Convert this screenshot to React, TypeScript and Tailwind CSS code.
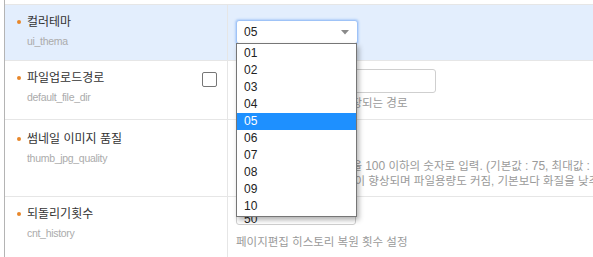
import type { ReactNode } from "react";

const FONT = "font-['Liberation_Sans','Noto_Sans_CJK_KR',sans-serif]";

const options = ["01", "02", "03", "04", "05", "06", "07", "08", "09", "10"];

type RowProps = {
  label: string;
  name: string;
  active?: boolean;
  check?: boolean;
  labelPad?: string;
  className: string;
  children: ReactNode;
};

const Row = ({ label, name, active, check, labelPad = "pt-[8px]", className, children }: RowProps) => (
  <div className={`flex border-t border-[#e6e6e6] ${active ? "bg-[#e3eefd]" : "bg-white"}`}>
    <div className={`w-[222px] shrink-0 pl-[12px] ${labelPad}`}>
      <div className="flex h-[18px] items-center">
        <span className="h-[4px] w-[4px] shrink-0 rounded-full bg-[#e8872a]" />
        <span className="ml-[6px] text-[12px] leading-[18px] text-[#333]">{label}</span>
        {check && (
          <span className="ml-auto mr-[10px] mt-[2px] h-[15px] w-[15px] rounded-[2px] border border-[#767676] bg-white" />
        )}
      </div>
      <div className="mt-[1px] pl-[10px] text-[10.5px] leading-[18px] tracking-[-0.3px] text-[#ababab]">{name}</div>
    </div>
    <div className={`flex-1 border-l border-[#e6e6e6] pl-[8px] ${className}`}>{children}</div>
  </div>
);

const Help = ({ children }: { children: ReactNode }) => (
  <p className="whitespace-nowrap text-[11.5px] leading-[15px] text-[#9a9a9a]">{children}</p>
);

const Num = ({ children }: { children: ReactNode }) => <span className="text-[12px]">{children}</span>;

export default function App() {
  return (
    <div className={`h-[257px] overflow-hidden bg-white ${FONT}`}>
      <div className="ml-[4px] border-l border-[#b4b4b4] pt-[4px]">
        <Row label="컬러테마" name="ui_thema" active className="pt-[15px] pb-[16px]">
          <div className="relative w-[122px]">
            <div className="flex h-[24px] items-center justify-between rounded-[3px] border border-[#9fc3f7] bg-white pl-[7px] pr-[7px] text-[12px] text-[#222] shadow-[0_0_2px_1px_rgba(120,170,245,0.45)]">
              <span>05</span>
              <svg width="8" height="5" viewBox="0 0 8 5" className="mr-[1px]">
                <path d="M0 0h8L4 4.5z" fill="#8a8a8a" />
              </svg>
            </div>
            <ul className="absolute left-0 top-[23px] z-10 w-[121px] border border-[#767676] bg-white py-[1px] text-[12px] text-[#222] shadow-[2px_3px_5px_rgba(0,0,0,0.3)]">
              {options.map((o) => (
                <li
                  key={o}
                  className={`h-[17px] pl-[7px] leading-[17px] ${o === "05" ? "bg-[#1e90ff] text-white" : ""}`}
                >
                  {o}
                </li>
              ))}
            </ul>
          </div>
        </Row>

        <Row label="파일업로드경로" name="default_file_dir" check className="pt-[8px] pb-[8px]">
          <div className="h-[24px] w-[200px] rounded-[3px] border border-[#cfcfcf] bg-white" />
          <div className="mt-[3px]">
            <Help>업로드 파일이 서버에 저장되는 경로</Help>
          </div>
        </Row>

        <Row
          label="썸네일 이미지 품질"
          name="thumb_jpg_quality"
          labelPad="pt-[10px]"
          className="pt-[8px] pb-[7px]"
        >
          <div className="h-[24px] w-[120px] rounded-[3px] border border-[#cfcfcf] bg-white" />
          <div className="mt-[7px]">
            <Help>
              썸네일 이미지 저장 품질을 <Num>100</Num> 이하의 숫자로 입력<Num>. (</Num>기본값 <Num>: 75,</Num> 최대값{" "}
              <Num>: 100)</Num>
            </Help>
            <Help>값이 클수록, 썸네일 화질이 향상되며 파일용량도 커짐, 기본보다 화질을 낮추면 용량이 줄어듬</Help>
          </div>
        </Row>

        <Row label="되돌리기횟수" name="cnt_history" className="pt-[4px] pb-[8px]">
          <div className="h-[24px] w-[120px] rounded-[3px] border border-[#cfcfcf] bg-white pl-[7px] pt-[11px] text-[12px] leading-[12px] text-[#222]">
            50
          </div>
          <div className="mt-[10px]">
            <Help>페이지편집 히스토리 복원 횟수 설정</Help>
          </div>
        </Row>
      </div>
    </div>
  );
}
